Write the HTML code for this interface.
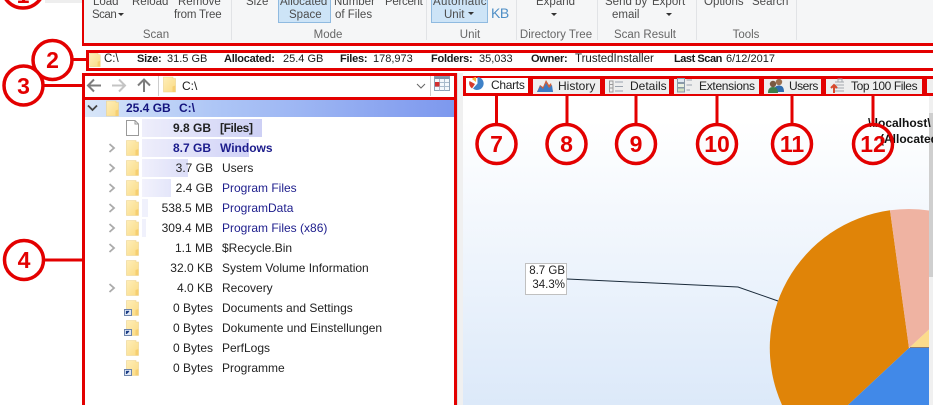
<!DOCTYPE html>
<html><head><meta charset="utf-8"><style>
html,body{margin:0;padding:0;background:#fff}
#p{position:relative;width:933px;height:405px;overflow:hidden;background:#fff;font-family:"Liberation Sans",sans-serif;font-size:12px;color:#1a1a1a}
#p div{position:absolute;box-sizing:border-box}
.t{white-space:nowrap;line-height:14px;height:14px}
.q{font-size:11.5px;color:#4c4c4c}
.r{color:#666;text-align:center;white-space:nowrap;line-height:14px;height:14px;font-size:11.5px}
.s{background:#e1e3e6;width:1px;top:0;height:40px}
.b{font-weight:bold;font-size:11px;letter-spacing:-.25px}
.v{font-size:11px}
.red{background:#e30000}
.sz{left:100px;width:113px;text-align:right;white-space:nowrap;line-height:14px;height:14px;color:#222}
.nm{left:222px;white-space:nowrap;line-height:14px;height:14px;color:#222}
.nb{font-weight:bold}
.bl{color:#1c1c8c}
.bar{left:142px;height:18px}
.tab{top:79px;height:15px;background:#eeeeee;color:#222;line-height:15px;white-space:nowrap}
svg{position:absolute}
</style></head><body><div id="p">
<svg width="0" height="0"><defs>
<linearGradient id="fg" x1="0" y1="0" x2="1" y2="1"><stop offset="0" stop-color="#feeeb9"/><stop offset="1" stop-color="#fbdb84"/></linearGradient>
<symbol id="f" viewBox="0 0 13 16"><path d="M.5.5H10V2H12.500V15.500H.5Z" fill="url(#fg)" stroke="#ecd28e" stroke-width=".6"/><path d="M9.500 15.500V10L12.500 9V15.500Z" fill="#f6cf72"/></symbol>
<symbol id="l" viewBox="0 0 15 16"><path d="M2.500.5H12V2H14.500V15.500H2.500Z" fill="url(#fg)" stroke="#ecd28e" stroke-width=".6"/><path d="M11.500 15.500V10L14.500 9V15.500Z" fill="#f6cf72"/><rect x=".5" y="9.500" width="7" height="6" fill="#dfe7f5" stroke="#6f86ad"/><path d="M2.500 14V11.500H5M2.500 13.500L5 11" stroke="#1d3f86" fill="none" stroke-width="1.200"/></symbol>
<symbol id="c" viewBox="0 0 8 10"><path d="M1.500 1L6 5L1.500 9" fill="none" stroke="#ababab" stroke-width="1.800"/></symbol>
</defs></svg>

<!-- ribbon -->
<div style="left:45px;top:0;width:38px;height:3px;background:#eee"></div>
<div style="left:84px;top:0;width:849px;height:43px;background:#f5f6f7"></div>
<div class="t q" style="left:93px;top:-5px">Load</div>
<div class="t q" style="left:132px;top:-5px">Reload</div>
<div class="t q" style="left:178px;top:-5px">Remove</div>
<div class="t q" style="left:246px;top:-5px">Size</div>
<div class="t q" style="left:334px;top:-5px">Number</div>
<div class="t q" style="left:385px;top:-5px;letter-spacing:-.3px">Percent</div>
<div class="t q" style="left:92px;top:8px;letter-spacing:-.5px">Scan</div>
<div style="left:118px;top:13px;width:0;height:0;border:3px solid transparent;border-top:3px solid #333"></div>
<div class="t q" style="left:174px;top:8px;letter-spacing:-.2px">from Tree</div>
<div style="left:278px;top:-1px;width:53px;height:24px;background:#cde4f7;border:1px solid #8fbae0"></div>
<div class="t q" style="left:280px;top:-5px">Allocated</div>
<div class="t q" style="left:289px;top:8px">Space</div>
<div class="t q" style="left:335px;top:8px">of Files</div>
<div style="left:431px;top:-1px;width:57px;height:24px;background:#cde4f7;border:1px solid #8fbae0"></div>
<div class="t q" style="left:433px;top:-5px;letter-spacing:.3px">Automatic</div>
<div class="t q" style="left:444px;top:8px">Unit</div>
<div style="left:468px;top:12px;width:0;height:0;border:3px solid transparent;border-top:3px solid #333"></div>
<div class="t" style="left:491px;top:6px;color:#4f8fc6;font-size:14px;letter-spacing:-.5px">KB</div>
<div class="t q" style="left:536px;top:-5px">Expand</div>
<div style="left:551px;top:13px;width:0;height:0;border:3px solid transparent;border-top:3px solid #333"></div>
<div class="t q" style="left:605px;top:-5px">Send by</div>
<div class="t q" style="left:652px;top:-5px">Export</div>
<div class="t q" style="left:612px;top:8px">email</div>
<div style="left:666px;top:13px;width:0;height:0;border:3px solid transparent;border-top:3px solid #333"></div>
<div class="t q" style="left:704px;top:-5px">Options</div>
<div class="t q" style="left:752px;top:-5px">Search</div>
<div class="r" style="left:125px;top:28px;width:62px">Scan</div>
<div class="r" style="left:298px;top:28px;width:60px">Mode</div>
<div class="r" style="left:440px;top:28px;width:60px">Unit</div>
<div class="r" style="left:516px;top:28px;width:80px">Directory Tree</div>
<div class="r" style="left:605px;top:28px;width:80px">Scan Result</div>
<div class="r" style="left:716px;top:28px;width:60px">Tools</div>
<div class="s" style="left:231px"></div><div class="s" style="left:426px"></div><div class="s" style="left:516px"></div><div class="s" style="left:597px"></div><div class="s" style="left:696px"></div><div class="s" style="left:796px"></div>
<div class="red" style="left:82px;top:0;width:2px;height:45px"></div>
<div class="red" style="left:82px;top:43px;width:851px;height:3px"></div>

<!-- status -->
<div class="red" style="left:86px;top:50px;width:847px;height:3px"></div>
<div class="red" style="left:86px;top:68px;width:847px;height:3px"></div>
<div class="red" style="left:86px;top:50px;width:3px;height:21px"></div>
<svg style="left:89px;top:53px" width="12" height="14"><use href="#f" width="12" height="14"/></svg>
<div class="t v" style="left:104px;top:52px;font-size:11.5px">C:\</div>
<div class="t b" style="left:137px;top:52px">Size:</div>
<div class="t v" style="left:167px;top:52px">31.5 GB</div>
<div class="t b" style="left:224px;top:52px">Allocated:</div>
<div class="t v" style="left:283px;top:52px">25.4 GB</div>
<div class="t b" style="left:340px;top:52px">Files:</div>
<div class="t v" style="left:373px;top:52px">178,973</div>
<div class="t b" style="left:431px;top:52px">Folders:</div>
<div class="t v" style="left:479px;top:52px">35,033</div>
<div class="t b" style="left:531px;top:52px">Owner:</div>
<div class="t" style="left:575px;top:52px;font-size:11.5px">TrustedInstaller</div>
<div class="t b" style="left:674px;top:52px;letter-spacing:-.45px">Last Scan</div>
<div class="t v" style="left:726px;top:52px">6/12/2017</div>

<!-- address -->
<div style="left:82px;top:73px;width:375px;height:26px;border:3px solid #e30000;border-bottom:none;background:#fff"></div>
<svg style="left:86px;top:76px" width="70" height="20"><path d="M2 9.500H15M8 3.500L2 9.500L8 15.500" fill="none" stroke="#7d7d7d" stroke-width="2"/><path d="M26 9.500H39M33 3.500L39 9.500L33 15.500" fill="none" stroke="#c4c4c4" stroke-width="2"/><path d="M58 16V3.500M52 9.500L58 3.500L64 9.500" fill="none" stroke="#7d7d7d" stroke-width="2"/></svg>
<div style="left:158px;top:76px;width:1px;height:20px;background:#ccc"></div>
<svg style="left:163px;top:76px" width="13" height="17"><use href="#f" width="13" height="17"/></svg>
<div class="t" style="left:182px;top:79px;font-size:12px">C:\</div>
<svg style="left:416px;top:82px" width="10" height="8"><path d="M1 2L5 6L9 2" fill="none" stroke="#666" stroke-width="1"/></svg>
<div style="left:430px;top:76px;width:1px;height:20px;background:#ccc"></div>
<svg style="left:434px;top:76px" width="16" height="15"><rect x=".5" y=".5" width="15" height="14" fill="#f4f8fc" stroke="#8ea3b8"/><rect x=".5" y=".5" width="15" height="2.500" fill="#7f93a8"/><path d="M5.500 3V14.500M10.500 3V14.500M1 6.500H15M1 10.500H15" stroke="#a9bbcc"/><rect x="1" y="6" width="4.500" height="4.500" fill="#d3302f"/></svg>

<!-- splitter -->
<div style="left:457px;top:73px;width:6px;height:332px;background:#f0f0f0"></div>
<div style="left:457px;top:73px;width:1px;height:332px;background:#ddd"></div>

<!-- tree -->
<div style="left:82px;top:97px;width:375px;height:320px;border:3px solid #e30000;background:#fff"></div>
<div style="left:85px;top:100px;width:369px;height:17px;background:linear-gradient(90deg,#d8e6f8,#aec6f6 35%,#7d98ee)"></div>
<svg style="left:87px;top:104px" width="11" height="8"><path d="M1 1.500L5.500 6L10 1.500" fill="none" stroke="#444" stroke-width="1.800"/></svg>
<svg style="left:106px;top:100px" width="13" height="17"><use href="#f" width="13" height="17"/></svg>
<div class="t nb" style="left:126px;top:101px;color:#14147e">25.4 GB</div>
<div class="t nb" style="left:179px;top:101px;color:#14147e">C:\</div>

<div class="bar" style="top:119px;width:120px;background:linear-gradient(90deg,#eeeefb,#cdd0f5)"></div>
<div class="bar" style="top:139px;width:107px;background:linear-gradient(90deg,#eeeefb,#d0d2f6)"></div>
<div class="bar" style="top:159px;width:46px;background:linear-gradient(90deg,#f0f0fc,#dcdef8)"></div>
<div class="bar" style="top:179px;width:29px;background:linear-gradient(90deg,#f2f2fc,#e4e6fa)"></div>
<div class="bar" style="top:199px;width:6px;background:#f0f1fc"></div>
<div class="bar" style="top:219px;width:4px;background:#f0f1fc"></div>

<svg style="left:126px;top:120px" width="13" height="16"><path d="M.5.5H9L12.500 4V15.500H.5Z" fill="#fff" stroke="#9a9a9a"/><path d="M9 .5V4H12.500" fill="none" stroke="#9a9a9a"/></svg>
<svg style="left:126px;top:140px" width="13" height="16"><use href="#f" width="13" height="16"/></svg>
<svg style="left:126px;top:160px" width="13" height="16"><use href="#f" width="13" height="16"/></svg>
<svg style="left:126px;top:180px" width="13" height="16"><use href="#f" width="13" height="16"/></svg>
<svg style="left:126px;top:200px" width="13" height="16"><use href="#f" width="13" height="16"/></svg>
<svg style="left:126px;top:220px" width="13" height="16"><use href="#f" width="13" height="16"/></svg>
<svg style="left:126px;top:240px" width="13" height="16"><use href="#f" width="13" height="16"/></svg>
<svg style="left:126px;top:260px" width="13" height="16"><use href="#f" width="13" height="16"/></svg>
<svg style="left:126px;top:280px" width="13" height="16"><use href="#f" width="13" height="16"/></svg>
<svg style="left:124px;top:300px" width="15" height="16"><use href="#l" width="15" height="16"/></svg>
<svg style="left:124px;top:320px" width="15" height="16"><use href="#l" width="15" height="16"/></svg>
<svg style="left:126px;top:340px" width="13" height="16"><use href="#f" width="13" height="16"/></svg>
<svg style="left:124px;top:360px" width="15" height="16"><use href="#l" width="15" height="16"/></svg>

<svg style="left:108px;top:143px" width="8" height="10"><use href="#c" width="8" height="10"/></svg>
<svg style="left:108px;top:163px" width="8" height="10"><use href="#c" width="8" height="10"/></svg>
<svg style="left:108px;top:183px" width="8" height="10"><use href="#c" width="8" height="10"/></svg>
<svg style="left:108px;top:203px" width="8" height="10"><use href="#c" width="8" height="10"/></svg>
<svg style="left:108px;top:223px" width="8" height="10"><use href="#c" width="8" height="10"/></svg>
<svg style="left:108px;top:243px" width="8" height="10"><use href="#c" width="8" height="10"/></svg>
<svg style="left:108px;top:283px" width="8" height="10"><use href="#c" width="8" height="10"/></svg>

<div class="sz nb" style="top:121px;left:98px;color:#222">9.8 GB</div><div class="nm nb" style="left:220px;top:121px;letter-spacing:-.4px">[Files]</div>
<div class="sz nb bl" style="top:141px;left:98px">8.7 GB</div><div class="nm nb bl" style="left:220px;top:141px">Windows</div>
<div class="sz" style="top:161px">3.7 GB</div><div class="nm" style="top:161px">Users</div>
<div class="sz" style="top:181px">2.4 GB</div><div class="nm bl" style="top:181px">Program Files</div>
<div class="sz" style="top:201px">538.5 MB</div><div class="nm bl" style="top:201px">ProgramData</div>
<div class="sz" style="top:221px">309.4 MB</div><div class="nm bl" style="top:221px">Program Files (x86)</div>
<div class="sz" style="top:241px">1.1 MB</div><div class="nm" style="top:241px">$Recycle.Bin</div>
<div class="sz" style="top:261px">32.0 KB</div><div class="nm" style="top:261px">System Volume Information</div>
<div class="sz" style="top:281px">4.0 KB</div><div class="nm" style="top:281px">Recovery</div>
<div class="sz" style="top:301px">0 Bytes</div><div class="nm" style="top:301px">Documents and Settings</div>
<div class="sz" style="top:321px">0 Bytes</div><div class="nm" style="top:321px">Dokumente und Einstellungen</div>
<div class="sz" style="top:341px">0 Bytes</div><div class="nm" style="top:341px">PerfLogs</div>
<div class="sz" style="top:361px">0 Bytes</div><div class="nm" style="top:361px">Programme</div>

<!-- chart -->
<div style="left:463px;top:96px;width:466px;height:309px;background:linear-gradient(180deg,#fff 0%,#fff 8%,#dce9f9 100%)"></div>
<div style="left:929px;top:96px;width:4px;height:309px;background:#f0f0f0"></div>
<div style="left:929px;top:113px;width:4px;height:164px;background:#cfcfcf"></div>
<div class="t nb" style="left:868px;top:116px;color:#111">\\localhost\</div>
<div class="t nb" style="left:880px;top:132px;color:#111">(Allocated</div>
<svg style="left:463px;top:96px" width="466" height="309">
<path d="M427 114.300L446 252L385 309H319A139 139 0 0 1 427 114.300Z" fill="#e08408"/>
<path d="M427 114.300A139 139 0 0 1 466 114.500V233.500L446 252Z" fill="#efb3a2"/>
<path d="M446 252L466 233.500V252Z" fill="#fcdc8c"/>
<path d="M446 252H466V309H385Z" fill="#4189e8"/>
<path d="M447 251.500H466" stroke="#8a7a72" fill="none"/>
<path d="M104 183L275 191L315 205" fill="none" stroke="#1a2a3a" stroke-width="1"/>
</svg>
<div style="left:525px;top:263px;width:42px;height:32px;background:#fff;border:1px solid #c0c0c0;text-align:right;padding-right:1px;line-height:14px;font-size:11.5px;color:#222">8.7 GB<br>34.3%</div>

<!-- tabs -->
<div class="red" style="left:463px;top:76px;width:470px;height:3px"></div>
<div class="red" style="left:463px;top:93px;width:470px;height:3px"></div>
<div class="red" style="left:463px;top:76px;width:3px;height:20px"></div>
<div class="tab" style="left:466px;top:78px;width:62px;height:15px;background:#fff;padding-left:25px;letter-spacing:-.3px">Charts</div>
<div class="red" style="left:528px;top:76px;width:5px;height:20px"></div>
<div class="tab" style="left:533px;width:67px;padding-left:25px">History</div>
<div class="red" style="left:600px;top:76px;width:5px;height:20px"></div>
<div class="tab" style="left:605px;width:64px;padding-left:25px">Details</div>
<div class="red" style="left:669px;top:76px;width:5px;height:20px"></div>
<div class="tab" style="left:674px;width:85px;padding-left:25px;letter-spacing:-.3px">Extensions</div>
<div class="red" style="left:759px;top:76px;width:5px;height:20px"></div>
<div class="tab" style="left:764px;width:57px;padding-left:25px;letter-spacing:-.5px">Users</div>
<div class="red" style="left:821px;top:76px;width:5px;height:20px"></div>
<div class="tab" style="left:826px;width:96px;padding-left:25px;letter-spacing:-.4px">Top 100 Files</div>
<div class="red" style="left:922px;top:76px;width:5px;height:20px"></div>
<div style="left:927px;top:79px;width:6px;height:14px;background:#eee"></div>
<svg style="left:468px;top:76px" width="16" height="15"><path d="M9.500 1A6.500 6.500 0 1 1 5 12.500L9.500 7.500Z" fill="#3f82c8"/><path d="M8 1V6L4 3A6 6 0 0 1 8 1Z" fill="#f5b63c"/><path d="M1.500 5L7 8L4 12.500A6.500 6.500 0 0 1 1.500 5Z" fill="#d83a2c"/></svg>
<svg style="left:537px;top:79px" width="16" height="14"><path d="M0 13L3 6L6 8L9 1L12 6L14 4L16 13Z" fill="#d0603a"/><path d="M0 13L3 7L6 10L9 4L12 9L15 6L16 13Z" fill="#3d7cc4"/></svg>
<svg style="left:608px;top:80px" width="16" height="13"><path d="M1.500 1H5V12H1.500ZM1.500 4.500H5M1.500 8H5" fill="none" stroke="#9a9a9a"/><path d="M7 2H15M7 6.500H15M7 11H15" stroke="#9aa2ad"/></svg>
<svg style="left:677px;top:78px" width="16" height="15"><rect x=".5" y=".5" width="7" height="4" fill="#dfe8f2" stroke="#8a9aa8"/><rect x=".5" y="5.500" width="7" height="4" fill="#e9f0e0" stroke="#8a9aa8"/><rect x=".5" y="10" width="7" height="4" fill="#cfe0c0" stroke="#8a9aa8"/><path d="M9.500 2H15M9.500 7H15M9.500 12H13" stroke="#9aa2ad"/></svg>
<svg style="left:767px;top:78px" width="18" height="15"><circle cx="12" cy="4" r="3.200" fill="#9a6f4e"/><path d="M7 14C7 9 9 7.500 12 7.500S17 9 17 14Z" fill="#2f6cae"/><circle cx="6" cy="6" r="3.200" fill="#7a5a42"/><path d="M1 15C1 10.500 3 9 6 9S11 10.500 11 15Z" fill="#3c7f4c"/></svg>
<svg style="left:829px;top:78px" width="18" height="16"><path d="M6 4H15M6 7H15M6 10H15M6 13H15M9 1H13V4H9Z" fill="none" stroke="#a4a8ae"/><path d="M5 15V8M2 10L5 7L8 10" fill="none" stroke="#d8492c" stroke-width="2"/></svg>

<!-- callouts -->
<svg style="left:0;top:0" width="933" height="405">
<g fill="none" stroke="#e30000" stroke-width="3.500">
<path d="M72 59.500H88M44 85.500H84M44 260H84M496.500 96V125M567 96V125M636 96V125M717 96V125M792 96V125M873 96V125" stroke-width="3"/>
<circle cx="23" cy="-13" r="21" fill="#fff"/>
<circle cx="52.500" cy="60" r="19.500" fill="#fff"/>
<circle cx="23.500" cy="85.500" r="19.500" fill="#fff"/>
<circle cx="24" cy="260" r="19.500" fill="#fff"/>
<circle cx="496.500" cy="144" r="19.500"/>
<circle cx="566.500" cy="144" r="19.500"/>
<circle cx="636" cy="144" r="19.500"/>
<circle cx="717" cy="144" r="19.500"/>
<circle cx="792" cy="144" r="19.500"/>
<circle cx="873" cy="144" r="19.500"/>
</g>
<g fill="#e30000" font-family="'Liberation Sans',sans-serif" font-weight="bold" font-size="23" text-anchor="middle">
<text x="23" y="3">1</text>
<text x="52.500" y="68">2</text>
<text x="23.500" y="94">3</text>
<text x="24" y="268">4</text>
<text x="496.500" y="152">7</text>
<text x="566.500" y="152">8</text>
<text x="636" y="152">9</text>
<text x="717" y="152">10</text>
<text x="792" y="152">11</text>
<text x="873" y="152">12</text>
</g>
</svg>
</div></body></html>
